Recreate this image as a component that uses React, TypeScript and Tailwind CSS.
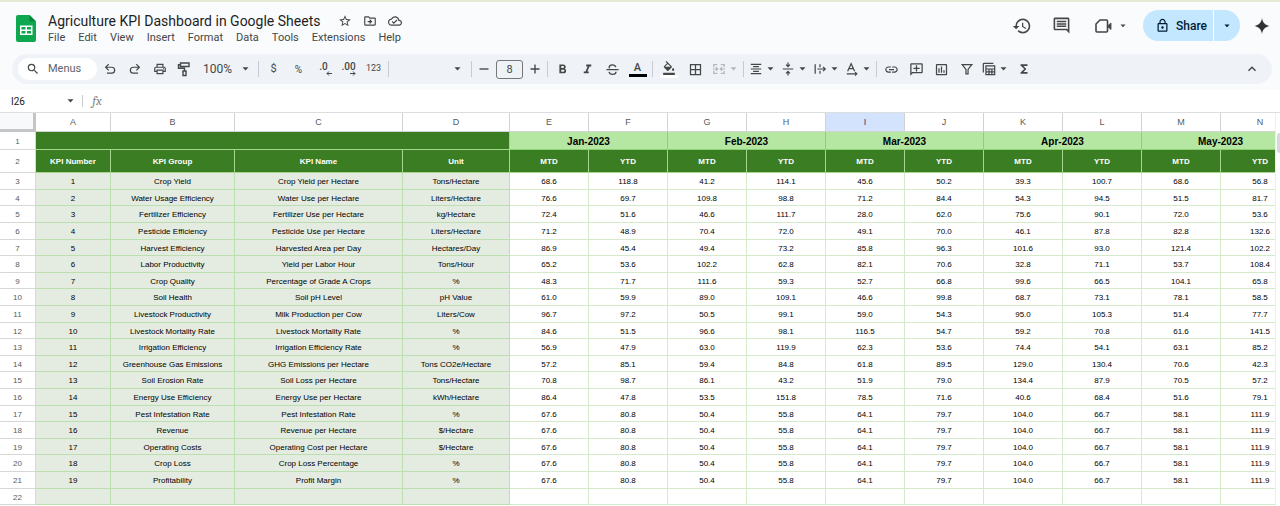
import type { ReactNode } from "react";
import { clsx } from "clsx";
import {
  MdBorderAll,
  MdFormatAlignCenter,
  MdFormatBold,
  MdFormatColorFill,
  MdFormatItalic,
  MdFunctions,
  MdHistory,
  MdKeyboardArrowUp,
  MdLink,
  MdOutlineAddComment,
  MdOutlineCloudDone,
  MdOutlineDriveFileMove,
  MdOutlineInsertChart,
  MdOutlineInsertComment,
  MdOutlineLock,
  MdOutlinePrint,
  MdSearch,
  MdStarBorder,
} from "react-icons/md";

type KpiRow = {
  group: string;
  name: string;
  unit: string;
  values: string[];
};

const kpi = (
  group: string,
  name: string,
  unit: string,
  values: string,
): KpiRow => ({ group, name, unit, values: values.split(" ") });

const repeated = "67.6 80.8 50.4 55.8 64.1 79.7 104.0 66.7 58.1 111.9";

const rows: KpiRow[] = [
  kpi("Crop Yield", "Crop Yield per Hectare", "Tons/Hectare", "68.6 118.8 41.2 114.1 45.6 50.2 39.3 100.7 68.6 56.8"),
  kpi("Water Usage Efficiency", "Water Use per Hectare", "Liters/Hectare", "76.6 69.7 109.8 98.8 71.2 84.4 54.3 94.5 51.5 81.7"),
  kpi("Fertilizer Efficiency", "Fertilizer Use per Hectare", "kg/Hectare", "72.4 51.6 46.6 111.7 28.0 62.0 75.6 90.1 72.0 53.6"),
  kpi("Pesticide Efficiency", "Pesticide Use per Hectare", "Liters/Hectare", "71.2 48.9 70.4 72.0 49.1 70.0 46.1 87.8 82.8 132.6"),
  kpi("Harvest Efficiency", "Harvested Area per Day", "Hectares/Day", "86.9 45.4 49.4 73.2 85.8 96.3 101.6 93.0 121.4 102.2"),
  kpi("Labor Productivity", "Yield per Labor Hour", "Tons/Hour", "65.2 53.6 102.2 62.8 82.1 70.6 32.8 71.1 53.7 108.4"),
  kpi("Crop Quality", "Percentage of Grade A Crops", "%", "48.3 71.7 111.6 59.3 52.7 66.8 99.6 66.5 104.1 65.8"),
  kpi("Soil Health", "Soil pH Level", "pH Value", "61.0 59.9 89.0 109.1 46.6 99.8 68.7 73.1 78.1 58.5"),
  kpi("Livestock Productivity", "Milk Production per Cow", "Liters/Cow", "96.7 97.2 50.5 99.1 59.0 54.3 95.0 105.3 51.4 77.7"),
  kpi("Livestock Mortality Rate", "Livestock Mortality Rate", "%", "84.6 51.5 96.6 98.1 116.5 54.7 59.2 70.8 61.6 141.5"),
  kpi("Irrigation Efficiency", "Irrigation Efficiency Rate", "%", "56.9 47.9 63.0 119.9 62.3 53.6 74.4 54.1 63.1 85.2"),
  kpi("Greenhouse Gas Emissions", "GHG Emissions per Hectare", "Tons CO2e/Hectare", "57.2 85.1 59.4 84.8 61.8 89.5 129.0 130.4 70.6 42.3"),
  kpi("Soil Erosion Rate", "Soil Loss per Hectare", "Tons/Hectare", "70.8 98.7 86.1 43.2 51.9 79.0 134.4 87.9 70.5 57.2"),
  kpi("Energy Use Efficiency", "Energy Use per Hectare", "kWh/Hectare", "86.4 47.8 53.5 151.8 78.5 71.6 40.6 68.4 51.6 79.1"),
  kpi("Pest Infestation Rate", "Pest Infestation Rate", "%", repeated),
  kpi("Revenue", "Revenue per Hectare", "$/Hectare", repeated),
  kpi("Operating Costs", "Operating Cost per Hectare", "$/Hectare", repeated),
  kpi("Crop Loss", "Crop Loss Percentage", "%", repeated),
  kpi("Profitability", "Profit Margin", "%", repeated),
];

const letters = "ABCDEFGHIJKLMN".split("");
const months = ["Jan-2023", "Feb-2023", "Mar-2023", "Apr-2023", "May-2023"];
const menus = ["File", "Edit", "View", "Insert", "Format", "Data", "Tools", "Extensions", "Help"];

const Caret = ({ className }: { className?: string }) => (
  <svg viewBox="0 0 8 4" className={clsx("h-1 shrink-0", className ?? "w-[7px]")} fill="currentColor">
    <path d="M0.6 0h6.8L4 3.8z" />
  </svg>
);

const Divider = () => <div className="mx-0.5 h-4 w-px shrink-0 bg-[#c7cbd1]" />;

type ToolProps = {
  label: string;
  children: ReactNode;
  className?: string;
};

const Tool = ({ label, children, className }: ToolProps) => (
  <button
    aria-label={label}
    className={clsx(
      "flex h-6 shrink-0 items-center justify-center",
      className ?? "w-[25px]",
    )}
  >
    {children}
  </button>
);

const DropTool = ({ label, children, className }: ToolProps) => (
  <button
    aria-label={label}
    className={clsx("flex h-6 w-8 shrink-0 items-center gap-1 pl-[3px]", className)}
  >
    {children}
    <Caret />
  </button>
);

const Stroke = ({ children, className }: { children: ReactNode; className?: string }) => (
  <svg
    viewBox="0 0 16 16"
    className={clsx("shrink-0", className ?? "size-4")}
    fill="none"
    stroke="currentColor"
    strokeWidth="1.4"
  >
    {children}
  </svg>
);

const SheetsLogo = () => (
  <svg viewBox="0 0 20 27" className="h-[27px] w-5 shrink-0">
    <path d="M2 0h11.5L20 6.5V25a2 2 0 0 1-2 2H2a2 2 0 0 1-2-2V2a2 2 0 0 1 2-2z" fill="#0fa750" />
    <path d="M13.5 0L20 6.5h-5a1.5 1.5 0 0 1-1.500-1.500z" fill="#0b8640" />
    <path d="M4 10.500h12.500v9.500H4zM5.500 12v2.500h4V12zM11 12v2.500h4V12zM5.500 16v2.500h4V16zM11 16v2.500h4V16z" fill="#fff" fillRule="evenodd" />
  </svg>
);

const TitleBar = () => (
  <header className="flex h-[50px] items-start justify-between pr-2.5 pl-4">
    <div className="flex gap-3 pt-[11px]">
      <SheetsLogo />
      <div className="-mt-1">
        <div className="flex h-[19px] items-center gap-[18px] text-[#444746]">
          <h1 className="text-[14px] leading-5 whitespace-nowrap text-[#1f1f1f]">
            Agriculture KPI Dashboard in Google Sheets
          </h1>
          <div className="flex items-center gap-[11px]">
            <button aria-label="Star">
              <MdStarBorder className="size-3.5" />
            </button>
            <button aria-label="Move">
              <MdOutlineDriveFileMove className="size-3.5" />
            </button>
            <button aria-label="Document status">
              <MdOutlineCloudDone className="size-3.5" />
            </button>
          </div>
        </div>
        <nav className="flex h-4 items-center gap-[13px] text-[11px] text-[#444746]">
          {menus.map((menu) => (
            <button key={menu}>{menu}</button>
          ))}
        </nav>
      </div>
    </div>

    <div className="flex items-center pt-1.5 text-[#444746]">
      <button aria-label="Version history" className="mr-5">
        <MdHistory className="size-5" />
      </button>
      <button aria-label="Comments" className="mr-6">
        <MdOutlineInsertComment className="size-[19px]" />
      </button>
      <button aria-label="Join a call" className="mr-[17px] flex items-center gap-2">
        <svg viewBox="0 0 17 14" className="h-3.5 w-[17px]" fill="none" stroke="currentColor" strokeWidth="1.6">
          <path d="M5 1h6.500q1 0 1 1v10q0 1-1 1H2q-1 0-1-1V5z" strokeLinejoin="round" />
          <path d="M12.500 7l3.500-3v6.500l-3.500-3z" fill="currentColor" strokeWidth="0.8" />
        </svg>
        <Caret className="w-1.5" />
      </button>
      <div className="mr-3.5 flex h-[31px] overflow-hidden rounded-full bg-[#c2e7ff] text-[#001d35]">
        <button className="flex w-[71px] items-center gap-1.5 border-r border-white pl-3 text-[12px] font-medium">
          <MdOutlineLock className="size-[15px] shrink-0" />
          Share
        </button>
        <button aria-label="Sharing options" className="flex w-[26px] items-center justify-center">
          <Caret className="w-1.5" />
        </button>
      </div>
      <button aria-label="Ask Gemini">
        <svg viewBox="0 0 16 16" className="size-4" fill="#303134">
          <path d="M8 0c.7 4.700 3.300 7.300 8 8-4.700.7-7.300 3.300-8 8-.7-4.700-3.300-7.300-8-8 4.700-.7 7.300-3.300 8-8z" />
        </svg>
      </button>
    </div>
  </header>
);

const Toolbar = () => (
  <div
    role="toolbar"
    className="mr-2 ml-3 flex h-[30px] items-center rounded-full bg-[#eff3f8] pr-3 pl-1.5 text-[#444746]"
  >
    <label className="flex h-[22px] w-[79px] shrink-0 items-center gap-2 rounded-full bg-white pl-2">
      <MdSearch className="size-3.5 shrink-0" />
      <input
        aria-label="Search the menus"
        placeholder="Menus"
        className="w-11 text-[11px] outline-none placeholder:text-[#5f6368]"
      />
    </label>

    <Tool label="Undo">
      <Stroke className="size-3.5">
        <path d="M6.500 2.500L3 6l3.500 3.500M3 6h7a3.300 3.300 0 0 1 0 6.600H4.500" />
      </Stroke>
    </Tool>
    <Tool label="Redo">
      <Stroke className="size-3.5">
        <path d="M9.500 2.500L13 6l-3.500 3.500M13 6H6a3.300 3.300 0 0 0 0 6.600h5.500" />
      </Stroke>
    </Tool>
    <Tool label="Print">
      <MdOutlinePrint className="size-3.5" />
    </Tool>
    <Tool label="Paint format" className="w-[23px]">
      <Stroke>
        <path d="M4.500 2h8.500v3.500H4.500zM4.500 3.700H2.500v3.600h6v2.700M7 10h3v4.500H7z" />
      </Stroke>
    </Tool>
    <button className="flex w-[61px] shrink-0 items-center gap-2.5 pl-2 text-[12px]">
      100%
      <Caret />
    </button>
    <Divider />
    <Tool label="Format as currency">
      <span className="text-[11px]">$</span>
    </Tool>
    <Tool label="Format as percent">
      <span className="text-[10px]">%</span>
    </Tool>
    <Tool label="Decrease decimal places">
      <span className="flex flex-col items-center text-[10px] leading-2 font-medium">
        .0
        <svg viewBox="0 0 6 5" className="ml-2.5 h-[5px] w-1.5" fill="none" stroke="currentColor">
          <path d="M6 2.500H1M3 .5l-2 2 2 2" />
        </svg>
      </span>
    </Tool>
    <Tool label="Increase decimal places">
      <span className="flex flex-col items-center text-[10px] leading-2 font-medium">
        .00
        <svg viewBox="0 0 6 5" className="ml-2 h-[5px] w-1.5" fill="none" stroke="currentColor">
          <path d="M0 2.500h5M3 .5l2 2-2 2" />
        </svg>
      </span>
    </Tool>
    <Tool label="More formats">
      <span className="text-[9px]">123</span>
    </Tool>
    <Divider />
    <button aria-label="Font" className="flex h-6 w-[78px] shrink-0 items-center justify-end pr-2">
      <Caret />
    </button>
    <Divider />
    <div className="flex shrink-0 items-center gap-0.5">
      <Tool label="Decrease font size" className="w-5">
        <Stroke className="size-3">
          <path d="M2 8h12" strokeWidth="1.800" />
        </Stroke>
      </Tool>
      <input
        aria-label="Font size"
        defaultValue="8"
        className="h-[19px] w-[27px] rounded-[3px] border border-[#747775] text-center text-[11px]"
      />
      <Tool label="Increase font size" className="w-5">
        <Stroke className="size-3">
          <path d="M2 8h12M8 2v12" strokeWidth="1.800" />
        </Stroke>
      </Tool>
    </div>
    <Divider />
    <Tool label="Bold">
      <MdFormatBold className="size-[15px]" />
    </Tool>
    <Tool label="Italic">
      <MdFormatItalic className="size-[15px]" />
    </Tool>
    <Tool label="Strikethrough">
      <Stroke className="size-[15px]">
        <path d="M1.500 8.200h13M11.500 5.500C11 3.800 9.800 3 8 3 5.800 3 4.500 4.200 4.500 5.700c0 .5.100.8.300 1.100M4.300 10.500c.4 1.700 1.700 2.600 3.700 2.600 2.300 0 3.700-1.100 3.700-2.700" />
      </Stroke>
    </Tool>
    <Tool label="Text color">
      <span className="w-[18px] border-b-[3px] border-black text-[11px] leading-3 font-medium">A</span>
    </Tool>
    <Divider />
    <Tool label="Fill color" className="w-[27px]">
      <span className="flex w-[18px] justify-center border-b-[3px] border-white">
        <MdFormatColorFill className="size-3.5" />
      </span>
    </Tool>
    <Tool label="Borders" className="w-[27px]">
      <MdBorderAll className="size-[15px]" />
    </Tool>
    <DropTool label="Merge cells" className="text-[#b4b8bc]">
      <Stroke className="size-3.5">
        <path d="M6 3H2v3M10 3h4v3M6 13H2v-3M10 13h4v-3M1 8h5M4.500 6l2 2-2 2M15 8h-5M11.500 6l-2 2 2 2" />
      </Stroke>
    </DropTool>
    <Divider />
    <DropTool label="Horizontal align">
      <MdFormatAlignCenter className="size-3.5 shrink-0" />
    </DropTool>
    <DropTool label="Vertical align">
      <Stroke className="size-3.5">
        <path d="M2 8h12M8 .5v4.500M5.800 3L8 5.200 10.200 3M8 15.500V11M5.800 13L8 10.800l2.200 2.200" />
      </Stroke>
    </DropTool>
    <DropTool label="Text wrapping">
      <Stroke className="size-3.5">
        <path d="M2.500 2.500v11M8 2.500v3.500M8 10v3.500M5 8h9M11.500 5.500L14 8l-2.500 2.500" />
      </Stroke>
    </DropTool>
    <DropTool label="Text rotation">
      <Stroke className="size-3.5">
        <path d="M3 10.500L7 2l4 8.500M4.500 7.500h5M2 13.500h11.500M11.500 11.500l2 2-2 2" />
      </Stroke>
    </DropTool>
    <Divider />
    <Tool label="Insert link">
      <MdLink className="size-[15px]" />
    </Tool>
    <Tool label="Insert comment">
      <MdOutlineAddComment className="size-[15px] -scale-x-100" />
    </Tool>
    <Tool label="Insert chart">
      <MdOutlineInsertChart className="size-[15px]" />
    </Tool>
    <Tool label="Create a filter">
      <Stroke className="size-3.5">
        <path d="M2.500 3h11L9.200 8.500v5H6.800v-5z" />
      </Stroke>
    </Tool>
    <DropTool label="Filter views">
      <Stroke className="size-3.5">
        <path d="M1.500 12V2.500q0-1 1-1H13M4.500 4.500h10v10h-10zM4.500 8h10M4.500 11.200h10M8 8v6.500M11.300 8v6.500" />
      </Stroke>
    </DropTool>
    <Tool label="Functions">
      <MdFunctions className="size-3.5" />
    </Tool>
    <Tool label="Hide the menus" className="ml-auto">
      <MdKeyboardArrowUp className="size-4" />
    </Tool>
  </div>
);

const FormulaBar = () => (
  <div className="flex h-[22px] items-center bg-white">
    <input
      aria-label="Name box"
      defaultValue="I26"
      className="ml-[11px] w-14 text-[10px] text-[#202124] outline-none"
    />
    <button aria-label="Named ranges" className="flex h-4 w-[15px] items-center text-[#444746]">
      <Caret />
    </button>
    <div className="h-3 w-px bg-[#c7cbd1]" />
    <label htmlFor="formula" className="w-7 text-center font-serif text-[13px] leading-4 text-[#80868b] italic">
      fx
    </label>
    <input id="formula" className="flex-1 text-[10px] outline-none" />
  </div>
);

const headCell = "h-[23px] border-r border-b border-[#a5d68c] bg-[#3b7d22] pt-px font-bold text-white";
const nameCell = "border-r border-b border-[#bcdfb0] bg-[#e4ece1] pt-0.5";
const valueCell = "border-r border-b border-[#d5eacb] bg-white pt-0.5";
const rowHeader = "border-r border-b border-[#d5d8d5] bg-white pt-0.5 font-normal text-[#575b5f]";

const Sheet = () => (
  <main className="flex min-h-0 flex-1 border-t border-[#dcdedf]">
    <div className="min-w-0 flex-1 overflow-hidden">
      <table className="w-[1299px] table-fixed border-separate border-spacing-0 text-center text-[8px] leading-[10px] whitespace-nowrap text-black">
        <colgroup>
          <col className="w-9" />
          <col className="w-[75px]" />
          <col className="w-[124px]" />
          <col className="w-[168px]" />
          <col className="w-[107px]" />
          {letters.slice(4).map((letter) => (
            <col key={letter} className="w-[79px]" />
          ))}
        </colgroup>
        <thead>
          <tr className="h-[19px]">
            <th className="border-r-[3px] border-b-[3px] border-[#c3c5c7] bg-[#f8f9fb]" />
            {letters.map((letter) => (
              <th
                key={letter}
                className={clsx(
                  "border-r border-b border-[#d0d2d4] text-[9px] font-normal",
                  letter === "I" ? "bg-[#d3e3fd] text-[#1f3c70]" : "bg-white text-[#575b5f]",
                )}
              >
                {letter}
              </th>
            ))}
          </tr>
        </thead>
        <tbody>
          <tr className="h-[18px]">
            <th className={rowHeader}>1</th>
            <td colSpan={4} className="border-r border-b border-[#a5d68c] bg-[#3b7d22]" />
            {months.map((month) => (
              <td
                key={month}
                colSpan={2}
                className="border-r border-b border-[#8fcf76] bg-[#b5e6a2] pt-[3px] text-[10px] font-bold text-black"
              >
                {month}
              </td>
            ))}
          </tr>
          <tr>
            <th className={rowHeader}>2</th>
            <td className={headCell}>KPI Number</td>
            <td className={headCell}>KPI Group</td>
            <td className={headCell}>KPI Name</td>
            <td className={headCell}>Unit</td>
            {letters.slice(4).map((letter, index) => (
              <td key={letter} className={headCell}>
                {index % 2 === 0 ? "MTD" : "YTD"}
              </td>
            ))}
          </tr>
          {rows.map((row, index) => (
            <tr key={row.name} className={index % 5 === 1 || index % 5 === 4 ? "h-4" : "h-[17px]"}>
              <th className={rowHeader}>{index + 3}</th>
              <td className={nameCell}>{index + 1}</td>
              <td className={nameCell}>{row.group}</td>
              <td className={nameCell}>{row.name}</td>
              <td className={nameCell}>{row.unit}</td>
              {row.values.map((value, column) => (
                <td key={column} className={valueCell}>
                  {value}
                </td>
              ))}
            </tr>
          ))}
          <tr className="h-4">
            <th className={rowHeader}>22</th>
            {letters.map((letter, index) => (
              <td key={letter} className={index < 4 ? nameCell : valueCell} />
            ))}
          </tr>
        </tbody>
      </table>
    </div>
    <div className="w-[5px] shrink-0 border-l border-[#eceef0] bg-white pt-5">
      <div className="ml-px h-5 rounded-l-full bg-[#d5d8dd]" />
    </div>
  </main>
);

export default function App() {
  return (
    <div className="flex h-screen flex-col overflow-hidden bg-white font-[Roboto,'Liberation_Sans',sans-serif]">
      <div className="border-t-2 border-[#e3ead6] bg-[#f9fbfd] pt-0.5 pb-1.5">
        <TitleBar />
        <Toolbar />
      </div>
      <FormulaBar />
      <div className="flex min-h-0 flex-1 flex-col font-['Liberation_Sans',Arial,sans-serif]">
        <Sheet />
      </div>
    </div>
  );
}
